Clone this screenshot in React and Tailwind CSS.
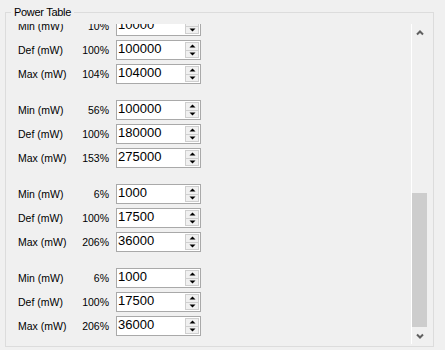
const groups = [
  [
    ["Min (mW)", "10%", "10000"],
    ["Def (mW)", "100%", "100000"],
    ["Max (mW)", "104%", "104000"],
  ],
  [
    ["Min (mW)", "56%", "100000"],
    ["Def (mW)", "100%", "180000"],
    ["Max (mW)", "153%", "275000"],
  ],
  [
    ["Min (mW)", "6%", "1000"],
    ["Def (mW)", "100%", "17500"],
    ["Max (mW)", "206%", "36000"],
  ],
  [
    ["Min (mW)", "6%", "1000"],
    ["Def (mW)", "100%", "17500"],
    ["Max (mW)", "206%", "36000"],
  ],
];

function Tri({ down }) {
  return (
    <svg width="7" height="4" viewBox="0 0 7 4" className="block">
      {down ? <path d="M0.5 0.5 L6.5 0.5 L3.5 3.5 Z" fill="#000" /> : <path d="M3.5 0.5 L6.5 3.5 L0.5 3.5 Z" fill="#000" />}
    </svg>
  );
}

function Spinner({ value }) {
  return (
    <div className="flex w-[85px] h-[20px] border border-[#a9a9a9] bg-white">
      <div className="flex-1 pl-[1px] text-[13px] leading-[16px] text-black">{value}</div>
      <div className="flex flex-col w-[14px] py-[1px] mr-[1px] gap-[0px]">
        <div className="flex-1 flex items-center justify-center border border-[#cfcfcf] bg-[#f0f0f0]">
          <Tri />
        </div>
        <div className="flex-1 flex items-center justify-center border border-t-0 border-[#cfcfcf] bg-[#f0f0f0]">
          <Tri down />
        </div>
      </div>
    </div>
  );
}

function Chevron({ down }) {
  return (
    <svg width="8" height="6" viewBox="0 0 8 6" className="block">
      <polyline
        points={down ? "1,1.5 4,4.5 7,1.5" : "1,4.5 4,1.5 7,4.5"}
        fill="none"
        stroke="#606060"
        strokeWidth="2"
      />
    </svg>
  );
}

export default function App() {
  return (
    <div className="w-[445px] h-[350px] bg-[#f0f0f0] pt-[12px] pl-[5px] font-['Liberation_Sans',Arial,sans-serif] text-black overflow-hidden">
      <div className="relative w-[429px] h-[335px] border border-[#dcdcdc] flex pt-[11px] pr-[5px] pb-[2px]">
        <span className="absolute left-[5px] top-[-8px] bg-[#f0f0f0] px-[3px] text-[11px] leading-[14px] tracking-[-0.3px]">
          Power Table
        </span>

        <div className="flex-1 overflow-hidden">
          <div className="mt-[-8px] pl-[12px] flex flex-col gap-[16px]">
            {groups.map((g, i) => (
              <div key={i} className="flex flex-col gap-[4px]">
                {g.map(([label, pct, val], j) => (
                  <div key={j} className="flex items-center h-[20px]">
                    <div className="w-[52px] text-[10.5px] leading-[12px]">{label}</div>
                    <div className="w-[39px] text-right text-[10.5px] leading-[12px]">{pct}</div>
                    <div className="ml-[7px]">
                      <Spinner value={val} />
                    </div>
                  </div>
                ))}
              </div>
            ))}
          </div>
        </div>

        <div className="w-[17px] border-l border-white flex flex-col">
          <div className="h-[17px] flex items-center justify-center pr-[1px]">
            <Chevron />
          </div>
          <div className="flex-1 flex flex-col justify-end">
            <div className="h-[134px] w-[15px] bg-[#cdcdcd]" />
          </div>
          <div className="h-[17px] flex items-center justify-center pr-[1px]">
            <Chevron down />
          </div>
        </div>
      </div>
    </div>
  );
}
